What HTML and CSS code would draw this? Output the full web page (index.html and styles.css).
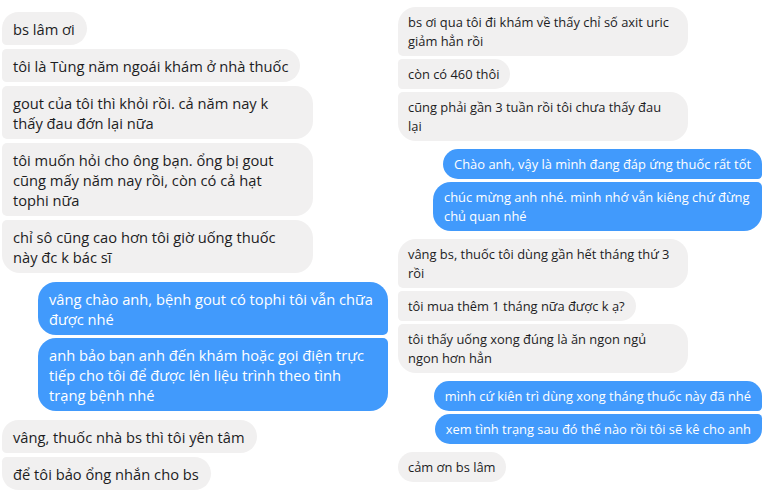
FILE: index.html
```html
<!DOCTYPE html>
<html lang="vi">
<head>
    <meta charset="UTF-8">
    <meta name="viewport" content="width=device-width, initial-scale=1.0">
    <title>Tin nhắn - bs Lâm</title>
    <link rel="stylesheet" href="styles.css">
</head>
<body>
    <main class="chat">
        <section class="column column-left">
            <div class="group in">
                <div class="msg">bs lâm ơi</div>
                <div class="msg">tôi là Tùng năm ngoái khám ở nhà thuốc</div>
                <div class="msg long">gout của tôi thì khỏi rồi. cả năm nay k<br>thấy đau đớn lại nữa</div>
                <div class="msg long">tôi muốn hỏi cho ông bạn. ổng bị gout<br>cũng mấy năm nay rồi, còn có cả hạt<br>tophi nữa</div>
                <div class="msg long">chỉ sô cũng cao hơn tôi giờ uống thuốc<br>này đc k bác sĩ</div>
            </div>
            <div class="group out">
                <div class="msg long">vâng chào anh, bệnh gout có tophi tôi vẫn chữa<br>được nhé</div>
                <div class="msg long">anh bảo bạn anh đến khám hoặc gọi điện trực<br>tiếp cho tôi để được lên liệu trình theo tình<br>trạng bệnh nhé</div>
            </div>
            <div class="group in">
                <div class="msg">vâng, thuốc nhà bs thì tôi yên tâm</div>
                <div class="msg">để tôi bảo ổng nhắn cho bs</div>
            </div>
        </section>
        <section class="column column-right">
            <div class="group in">
                <div class="msg long">bs ơi qua tôi đi khám về thấy chỉ số axit uric<br>giảm hẳn rồi</div>
                <div class="msg">còn có 460 thôi</div>
                <div class="msg long">cũng phải gần 3 tuần rồi tôi chưa thấy đau<br>lại</div>
            </div>
            <div class="group out">
                <div class="msg">Chào anh, vậy là mình đang đáp ứng thuốc rất tốt</div>
                <div class="msg long">chúc mừng anh nhé. mình nhớ vẫn kiêng chứ đừng<br>chủ quan nhé</div>
            </div>
            <div class="group in">
                <div class="msg long">vâng bs, thuốc tôi dùng gần hết tháng thứ 3<br>rồi</div>
                <div class="msg">tôi mua thêm 1 tháng nữa được k ạ?</div>
                <div class="msg long">tôi thấy uống xong đúng là ăn ngon ngủ<br>ngon hơn hẳn</div>
            </div>
            <div class="group out">
                <div class="msg">mình cứ kiên trì dùng xong tháng thuốc này đã nhé</div>
                <div class="msg">xem tình trạng sau đó thế nào rồi tôi sẽ kê cho anh</div>
            </div>
            <div class="group in">
                <div class="msg">cảm ơn bs lâm</div>
            </div>
        </section>
    </main>
</body>
</html>
```

FILE: styles.css
```css
body {
    margin: 0;
    background-color: #fff;
    font-family: "Open Sans", "Noto Sans", Arial, sans-serif;
    color: #1d1d1f;
}
.chat {
    display: flex;
    width: 768px;
    height: 500px;
    overflow: hidden;
}
.column {
    display: flex;
    flex-direction: column;
}
.column-left {
    width: 386px;
    padding: 12px 2px 0 2px;
    gap: 9px;
    font-size: 14.7px;
    line-height: 20px;
}
.column-right {
    width: 364px;
    padding: 7px 6px 0 8px;
    gap: 8px;
    font-size: 12.9px;
    line-height: 19px;
}
.group {
    display: flex;
    flex-direction: column;
    gap: 3px;
}
.column-left .group.in {
    gap: 4px;
}
.group.in {
    align-items: flex-start;
}
.group.out {
    align-items: flex-end;
}
.msg {
    box-sizing: border-box;
    border-radius: 18px;
    white-space: nowrap;
}
.column-left .msg {
    padding: 6.5px 12px 6.5px 11px;
}
.column-right .msg {
    padding: 5.5px 11px 5.5px 10px;
}
.in .msg {
    background-color: #f1f0f0;
    border-top-left-radius: 5px;
    border-bottom-left-radius: 5px;
}
.in .msg:first-child {
    border-top-left-radius: 18px;
}
.in .msg:last-child {
    border-bottom-left-radius: 18px;
}
.out .msg {
    background-color: #419afc;
    color: #fff;
    border-top-right-radius: 5px;
    border-bottom-right-radius: 5px;
}
.out .msg:first-child {
    border-top-right-radius: 18px;
}
.out .msg:last-child {
    border-bottom-right-radius: 18px;
}
/* wrapped bubbles take the full bubble width */
.column-left .in .msg.long {
    width: 311px;
}
.column-left .out .msg.long {
    width: 350px;
}
.column-right .in .msg.long {
    width: 290px;
}
.column-right .out .msg.long {
    width: 329px;
}
.column-right .out .msg {
    padding-left: 11px;
}
```
